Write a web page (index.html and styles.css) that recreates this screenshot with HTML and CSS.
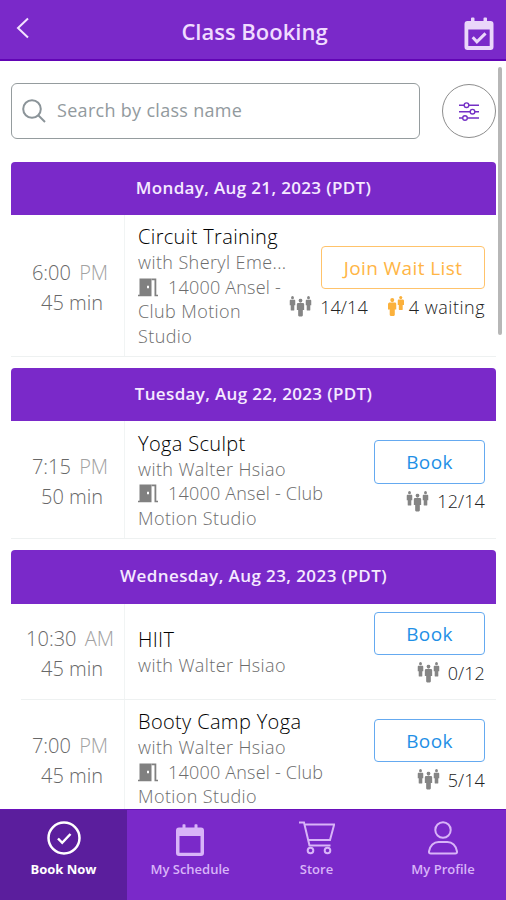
FILE: index.html
```html
<!DOCTYPE html>
<html lang="en">
<head>
<meta charset="utf-8">
<title>Class Booking</title>
<link rel="stylesheet" href="styles.css">
</head>
<body>
<svg class="defs" width="0" height="0">
  <symbol id="person" viewBox="0 0 8 17" preserveAspectRatio="none"><circle cx="4" cy="1.900" r="1.900"/><path d="M1 4.200h6l1 1v5.300H6.400V15.500a1 1 0 0 1-1 1H2.600a1 1 0 0 1-1-1V10.500H0V5.200z"/></symbol>
  <symbol id="people" viewBox="0 0 23 21"><use href="#person" x="0.500" y="0" width="6" height="15"/><use href="#person" x="16.500" y="0" width="6" height="15"/><use href="#person" x="7.600" y="2.500" width="7.800" height="18.500"/></symbol>
  <symbol id="door" viewBox="0 0 20 19"><path fill-rule="evenodd" d="M1.500.5h12v17.800H0v-1.500h1.500zM9 7.800v2.500h2V7.800z"/><path d="M13.500.5h4.800v16.300H20v1.500h-3.500V2.300h-3z"/></symbol>
</svg>
<div class="app">
  <header class="topbar">
    <svg class="back" viewBox="0 0 14 22"><path d="M12 1.500 2 11l10 9.500"/></svg>
    <h1>Class Booking</h1>
    <svg class="cal-check" viewBox="0 0 30 34"><path fill-rule="evenodd" d="M3.500 4H7V1.500a1 1 0 0 1 1-1h1.500a1 1 0 0 1 1 1V4h9V1.500a1 1 0 0 1 1-1H22a1 1 0 0 1 1 1V4h3.500a3 3 0 0 1 3 3v23a3 3 0 0 1-3 3h-23a3 3 0 0 1-3-3V7a3 3 0 0 1 3-3zM4.300 12.500v16.500h21.400V12.500z"/><path class="tick" d="m8.700 20.300 4.200 4.500 8.600-8.400"/></svg>
  </header>
  <main class="content">
    <div class="search-row">
      <div class="search">
        <svg class="lens" viewBox="0 0 24 24"><circle cx="10" cy="10" r="8.800"/><path d="m16.500 16.500 6.500 6.500"/></svg>
        <span class="placeholder">Search by class name</span>
      </div>
      <div class="filter">
        <svg viewBox="0 0 20 19"><path d="M0 3.200h5m5 0h10M0 9.700h11m5 0h4M0 16h3.500m5 0H20"/><circle cx="7.500" cy="3.200" r="2.300"/><circle cx="13.500" cy="9.700" r="2.300"/><circle cx="6" cy="16" r="2.300"/></svg>
      </div>
    </div>

    <section class="day">
      <h2>Monday, Aug 21, 2023 (PDT)</h2>
      <div class="row tall">
        <div class="time"><div class="clock">6:00 <i>PM</i></div><div class="length">45 min</div></div>
        <div class="info"><h3>Circuit Training</h3><p>with Sheryl Eme...</p><p><span class="place"><svg class="door"><use href="#door"/></svg>14000 Ansel -</span><br>Club Motion<br>Studio</p></div>
        <div class="actions"><a class="btn wait">Join Wait List</a><div class="stats"><svg class="people"><use href="#people"/></svg><span>14/14</span><svg class="pair" viewBox="0 0 16 21"><use href="#person" x="0" y="2" width="8.500" height="18.500"/><use href="#person" x="9.500" y="0" width="6.500" height="14.500"/></svg><span class="waiting">4 waiting</span></div></div>
      </div>
    </section>

    <section class="day">
      <h2>Tuesday, Aug 22, 2023 (PDT)</h2>
      <div class="row">
        <div class="time"><div class="clock">7:15 <i>PM</i></div><div class="length">50 min</div></div>
        <div class="info"><h3>Yoga Sculpt</h3><p>with Walter Hsiao</p><p><span class="place"><svg class="door"><use href="#door"/></svg>14000 Ansel - Club</span><br>Motion Studio</p></div>
        <div class="actions"><a class="btn">Book</a><div class="stats"><svg class="people"><use href="#people"/></svg><span>12/14</span></div></div>
      </div>
    </section>

    <section class="day">
      <h2 class="long">Wednesday, Aug 23, 2023 (PDT)</h2>
      <div class="row short">
        <div class="time"><div class="clock">10:30 <i>AM</i></div><div class="length">45 min</div></div>
        <div class="info"><h3>HIIT</h3><p>with Walter Hsiao</p></div>
        <div class="actions"><a class="btn">Book</a><div class="stats"><svg class="people"><use href="#people"/></svg><span>0/12</span></div></div>
      </div>
      <div class="row">
        <div class="time"><div class="clock">7:00 <i>PM</i></div><div class="length">45 min</div></div>
        <div class="info"><h3>Booty Camp Yoga</h3><p>with Walter Hsiao</p><p><span class="place"><svg class="door"><use href="#door"/></svg>14000 Ansel - Club</span><br>Motion Studio</p></div>
        <div class="actions"><a class="btn">Book</a><div class="stats"><svg class="people"><use href="#people"/></svg><span>5/14</span></div></div>
      </div>
    </section>
    <div class="scrollbar"></div>
  </main>
  <nav class="tabs">
    <a class="tab active"><svg viewBox="0 0 36 36"><circle cx="18" cy="18" r="15.500"/><path d="m12 18.500 4.200 4.300 8.300-8.800"/></svg><span>Book Now</span></a>
    <a class="tab"><svg viewBox="0 0 36 36"><path class="solid" fill-rule="evenodd" d="M7 7.500h3.500V5q0-.8.800-.8h1.400q.8 0 .8.800v2.500h9V5q0-.8.800-.8h1.400q.8 0 .8.800v2.500H29q3 0 3 3v22.500q0 3-3 3H7q-3 0-3-3V10.500q0-3 3-3zM7.500 16v16.700h21V16z"/></svg><span>My Schedule</span></a>
    <a class="tab"><svg viewBox="0 0 36 36"><path d="M0 2.500h5l5.500 23h21M6.500 4.500h28.700L31 20H9.500"/><circle cx="11.500" cy="30.500" r="2.800"/><circle cx="28.500" cy="30.500" r="2.800"/></svg><span>Store</span></a>
    <a class="tab"><svg viewBox="0 0 36 36"><circle cx="18" cy="10" r="7.700"/><path d="M5.800 33.500h24.400q2 0 1.800-2c-.8-6-5-9.500-9.500-9.500h-9C9 22 4.800 25.500 4 31.500q-.2 2 1.800 2z"/></svg><span>My Profile</span></a>
  </nav>
</div>
</body>
</html>
```
FILE: styles.css
```css
* { box-sizing: border-box; margin: 0; padding: 0; }
body { background: #fff; font-family: "Open Sans", sans-serif; overflow: hidden; }
.defs { display: block; }
.app { width: 506px; height: 900px; display: flex; flex-direction: column; }
.topbar { height: 61px; flex: none; background: #7a29c9; border-bottom: 2px solid #6205b5; display: flex; align-items: center; justify-content: space-between; padding: 5px 12px 0 16px; }
.topbar h1 { font: 600 22px/30px "Open Sans", sans-serif; color: #f0dcff; letter-spacing: 0; padding-left: 15px; margin-top: -2px; }
.back { width: 14px; height: 22px; fill: none; stroke: #f3e2ff; stroke-width: 2; margin-top: -8px; }
.cal-check { width: 30px; height: 34px; fill: #ead7fa; margin-top: 4px; }
.cal-check .tick { fill: none; stroke: #ead7fa; stroke-width: 3; }
.content { flex: 1; min-height: 0; overflow: hidden; padding: 22px 10px 0 11px; position: relative; }
.search-row { display: flex; justify-content: space-between; align-items: center; margin-bottom: 22.500px; }
.search { width: 409px; height: 56px; border: 1.500px solid #959c9e; border-radius: 6px; display: flex; align-items: center; padding: 0 0 2px 10px; }
.lens { width: 24px; height: 24px; fill: none; stroke: #8b9499; stroke-width: 2; margin-top: 2px; }
.placeholder { font-size: 18px; font-weight: 500; color: #929a9e; letter-spacing: .3px; margin-left: 11px; }
.filter { width: 54px; height: 54px; border: 1px solid #8d8d8d; border-radius: 50%; display: flex; align-items: center; justify-content: center; }
.filter svg { width: 20px; height: 19px; fill: none; stroke: #7430c5; stroke-width: 1.4; }
.day { margin-bottom: 11px; }
.day h2 { height: 53.500px; background: #7a29c9; border-radius: 4px 4px 0 0; color: #f5e9ff; font: 600 17px/52px "Open Sans", sans-serif; letter-spacing: .35px; text-align: center; white-space: nowrap; }
.day h2.long { letter-spacing: .42px; }
.row { height: 118px; display: flex; align-items: center; border-bottom: 1.500px solid #eef1f1; }
.row.tall { height: 141.500px; }
.row.short { height: 96px; border-image: linear-gradient(to right, transparent 11px, #eef1f1 11px) 1; border-width: 0 0 1px; }
.time { width: 114px; align-self: stretch; border-right: 1px solid #f1f4f4; display: flex; flex-direction: column; justify-content: center; padding: 5px 0 0 5px; font-size: 20px; line-height: 30px; color: #686868; text-align: center; font-weight: 300; flex: none; margin-right: 13px; }
.length { padding-left: 4px; }
.clock i { font-style: normal; color: #a2a2a2; margin-left: 3px; }
.info { flex: 1; white-space: nowrap; min-width: 0; font-size: 18px; line-height: 24.500px; color: #6c6c6c; font-weight: 300; letter-spacing: .4px; padding-top: 2px; }
.info h3 { font-size: 20px; line-height: 26px; font-weight: 300; color: #000; letter-spacing: .35px; }
.place { letter-spacing: .2px; }
.door { width: 20px; height: 19px; fill: #808080; vertical-align: -3px; margin-right: 10px; }
.actions { flex: none; height: 79px; display: flex; flex-direction: column; align-items: flex-end; margin-right: 11px; }
.btn { width: 111px; height: 43.500px; border: 1.500px solid #65aaf0; border-radius: 4px; color: #1f90e6; font-size: 19px; line-height: 43px; text-align: center; letter-spacing: .4px; }
.btn.wait { width: 164px; border-color: #ffc36b; color: #ffb545; }
.stats { display: flex; align-items: center; height: 35px; font-size: 18px; font-weight: 300; color: #222; letter-spacing: .1px; }
.waiting { letter-spacing: .5px; }
.people { width: 23px; height: 21px; fill: #858585; margin-right: 8px; }
.pair { width: 16px; height: 21px; fill: #fbb13c; margin: 0 5px 0 20px; }
.scrollbar { position: absolute; top: 6px; right: 4px; width: 4px; height: 268px; border-radius: 2px; background: #b7b7b7; }
.tabs { height: 91px; flex: none; display: grid; grid-template-columns: 127px 126px 127px 126px; background: #7a29c9; }
.tab { display: flex; flex-direction: column; align-items: center; padding-top: 10px; color: #d8b4f8; font-size: 13px; font-weight: 600; line-height: 18px; border-top: 1px solid #6a11bb; }
.tab svg { width: 36px; height: 36px; fill: none; stroke: currentColor; stroke-width: 2; margin-bottom: 4px; }
.tab .solid { fill: currentColor; stroke: none; }
.tab.active { background: #5b1e9d; color: #fff; font-weight: 700; }
.tab.active svg { stroke-width: 2.500; }
```
